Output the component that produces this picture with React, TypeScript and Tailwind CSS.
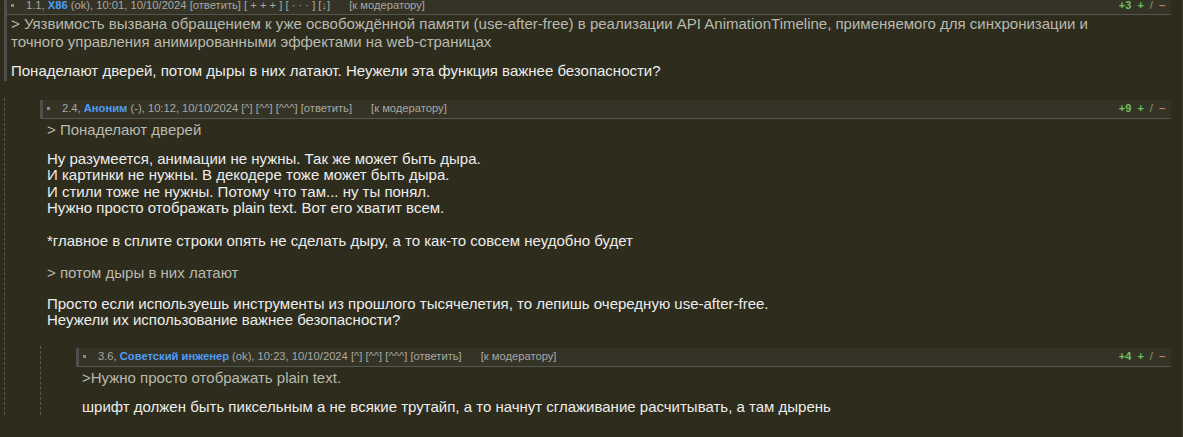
import React from "react";

type HeaderProps = {
  num: string;
  name: string;
  status: string;
  time: string;
  links: string;
  score: string;
};

function Header({ num, name, status, time, links, score }: HeaderProps) {
  return (
    <div className="flex items-center h-[19px] bg-[#343326] border-l-[3px] border-[#4e4e4c] border-b border-b-[#55554f] text-[11.2px] leading-[13px] text-[#a8a8a4] whitespace-nowrap">
      <span className="ml-[4px] w-[3px] h-[3px] bg-[#8a8a84]" />
      <span className="ml-[12px]">
        {num},{" "}
        <span className="font-bold text-[#4d9cf5]">{name}</span> ({status}), {time} {links}
      </span>
      <span className="ml-[19px]">[к модератору]</span>
      <span className="ml-auto mr-[6px] flex items-center gap-[6px] font-bold text-[11px]">
        <span className="text-[#6fc060]">{score}</span>
        <span className="text-[#6fc060]">+</span>
        <span className="font-normal text-[#a0906a]">/</span>
        <span className="text-[#c27a7a]">–</span>
      </span>
    </div>
  );
}

function Quote({ children }: { children: React.ReactNode }) {
  return <div className="text-[15px] leading-[18px] text-[#b9b9b0]">{children}</div>;
}

function Body({ children }: { children: React.ReactNode }) {
  return <div className="text-[15px] leading-[16.5px] text-[#ececec]">{children}</div>;
}

export default function App() {
  return (
    <div className="w-[1183px] h-[437px] overflow-hidden bg-[#2e2d1d] font-['Liberation_Sans',Arial,sans-serif] border-r border-r-[#3d3c2c]">
      <div className="-mt-[4px] pl-[4px] w-[1171px]">
        {/* level 1 */}
        <div className="border-l-[3px] border-[#4e4e4c]">
          <div className="-ml-[3px]">
            <Header
              num="1.1"
              name="X86"
              status="ok"
              time="10:01, 10/10/2024"
              links="[ответить] [ + + + ] [ · · · ]  [↓]"
              score="+3"
            />
          </div>
          <div className="pl-[4px] pb-[1px]">
            <Quote>
              &gt; Уязвимость вызвана обращением к уже освобождённой памяти (use-after-free) в реализации API AnimationTimeline, применяемого для синхронизации и
              <br />
              точного управления анимированными эффектами на web-страницах
            </Quote>
            <div className="mt-[12px]">
              <Body>Понаделают дверей, потом дыры в них латают. Неужели эта функция важнее безопасности?</Body>
            </div>
          </div>
        </div>

        {/* children of level 1 */}
        <div className="mt-[17px] pt-[2px] border-l border-dashed border-[#5a5a52] pl-[35px]">
          <Header
            num="2.4"
            name="Аноним"
            status="-"
            time="10:12, 10/10/2024"
            links="[^] [^^] [^^^] [ответить]"
            score="+9"
          />
          <div className="pl-[7px] pt-[2px]">
            <Quote>&gt; Понаделают дверей</Quote>
            <div className="mt-[12px]">
              <Body>
                Ну разумеется, анимации не нужны. Так же может быть дыра.
                <br />
                И картинки не нужны. В декодере тоже может быть дыра.
                <br />
                И стили тоже не нужны. Потому что там... ну ты понял.
                <br />
                Нужно просто отображать plain text. Вот его хватит всем.
                <br />
                <br />
                *главное в сплите строки опять не сделать дыру, а то как-то совсем неудобно будет
              </Body>
            </div>
            <div className="mt-[14px]">
              <Quote>&gt; потом дыры в них латают</Quote>
            </div>
            <div className="mt-[14px]">
              <Body>
                Просто если используешь инструменты из прошлого тысячелетия, то лепишь очередную use-after-free.
                <br />
                Неужели их использование важнее безопасности?
              </Body>
            </div>
          </div>

          {/* children of level 2 */}
          <div className="mt-[17px] pt-[2px] border-l border-dashed border-[#5a5a52] pl-[35px]">
            <Header
              num="3.6"
              name="Советский инженер"
              status="ok"
              time="10:23, 10/10/2024"
              links="[^] [^^] [^^^] [ответить]"
              score="+4"
            />
            <div className="pl-[6px] pt-[2px]">
              <Quote>&gt;Нужно просто отображать plain text.</Quote>
              <div className="mt-[12px]">
                <Body>шрифт должен быть пиксельным а не всякие трутайп, а то начнут сглаживание расчитывать, а там дырень</Body>
              </div>
            </div>
          </div>
        </div>
      </div>
    </div>
  );
}
